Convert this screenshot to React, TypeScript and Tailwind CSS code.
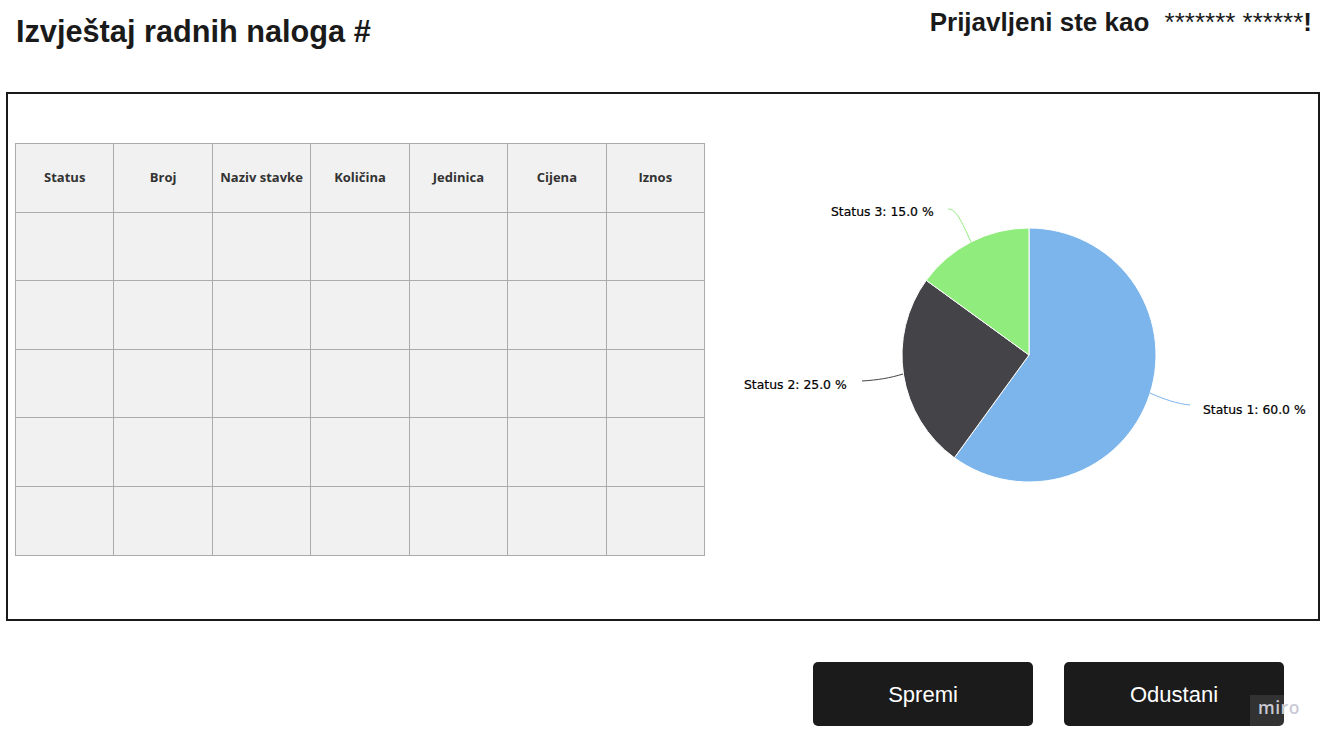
import React from "react";

const columns = ["Status", "Broj", "Naziv stavke", "Količina", "Jedinica", "Cijena", "Iznos"];
const rows = [0, 1, 2, 3, 4];

// pie geometry (svg coords)
const cx = 311;
const cy = 261;
const r = 127;

function pt(deg: number) {
  const a = (deg * Math.PI) / 180;
  return `${(cx + r * Math.sin(a)).toFixed(2)},${(cy - r * Math.cos(a)).toFixed(2)}`;
}

function slice(from: number, to: number) {
  const large = to - from > 180 ? 1 : 0;
  return `M${cx},${cy} L${pt(from)} A${r},${r} 0 ${large} 1 ${pt(to)} Z`;
}

function PieChart() {
  const label = { fontFamily: "'DejaVu Sans', sans-serif", fontSize: 12.4 };
  return (
    <svg width="600" height="525" viewBox="0 0 600 525" className="ml-[13px] shrink-0">
      <path d={slice(0, 216)} fill="#7cb5ec" stroke="#fff" strokeWidth="1" />
      <path d={slice(216, 306)} fill="#434348" stroke="#fff" strokeWidth="1" />
      <path d={slice(306, 360)} fill="#90ed7d" stroke="#fff" strokeWidth="1" />

      <path d="M230 115 C238 115 243 126 253 148" fill="none" stroke="#90ed7d" strokeWidth="1" />
      <path d="M144 287 C160 286 172 284 185 280" fill="none" stroke="#434348" strokeWidth="1" />
      <path d="M432 299 C445 305 460 310 472 311" fill="none" stroke="#7cb5ec" strokeWidth="1" />

      <text x="113" y="122" style={label} fill="#000" stroke="#000" strokeWidth="0.2">Status 3: 15.0 %</text>
      <text x="26" y="295" style={label} fill="#000" stroke="#000" strokeWidth="0.2">Status 2: 25.0 %</text>
      <text x="485" y="320" style={label} fill="#000" stroke="#000" strokeWidth="0.2">Status 1: 60.0 %</text>
    </svg>
  );
}

export default function App() {
  return (
    <div className="relative w-[1333px] h-[749px] bg-white overflow-hidden font-['Liberation_Sans',Arial,sans-serif] text-[#1a1a1a]">
      {/* header */}
      <div className="flex justify-between items-start h-[92px]">
        <h1 className="ml-[16px] mt-[17px] text-[30.7px] leading-none font-bold">Izvještaj radnih naloga #</h1>
        <div className="mr-[21px] mt-[9px] text-[26px] leading-none whitespace-pre">
          <span className="font-bold">Prijavljeni ste kao</span>
          <span className="ml-[8px]"> ******* ******</span>
          <span className="font-bold">!</span>
        </div>
      </div>

      {/* main panel */}
      <div className="ml-[6px] mr-[13px] h-[529px] border-2 border-[#1a1a1a] flex items-start">
        <table className="ml-[7px] mt-[49px] w-[690px] border-collapse bg-[#f1f1f1] font-['Open_Sans',sans-serif] shrink-0">
          <thead>
            <tr>
              {columns.map((c) => (
                <th
                  key={c}
                  className="h-[68.6px] w-[98.5px] border border-[#ababab] text-[13px] font-bold text-[#333] text-center align-middle p-0"
                >
                  {c}
                </th>
              ))}
            </tr>
          </thead>
          <tbody>
            {rows.map((r) => (
              <tr key={r}>
                {columns.map((c) => (
                  <td key={c} className="h-[68.6px] border border-[#ababab] p-0" />
                ))}
              </tr>
            ))}
          </tbody>
        </table>
        <PieChart />
      </div>

      {/* buttons */}
      <div className="flex justify-end gap-[31px] mt-[41px] mr-[49px]">
        <button className="w-[220px] h-[64px] rounded-[5px] bg-[#1b1b1b] text-white text-[22px]">Spremi</button>
        <button className="w-[220px] h-[64px] rounded-[5px] bg-[#1b1b1b] text-white text-[22px]">Odustani</button>
      </div>

      {/* watermark */}
      <div className="absolute left-[1250px] top-[695px] w-[34px] h-[31px] bg-white/10" />
      <div className="absolute left-[1258px] top-[699px] text-[17.5px] font-semibold leading-none text-[#cacad6] font-['Open_Sans',sans-serif] tracking-[0.5px]">
        miro
      </div>
    </div>
  );
}
